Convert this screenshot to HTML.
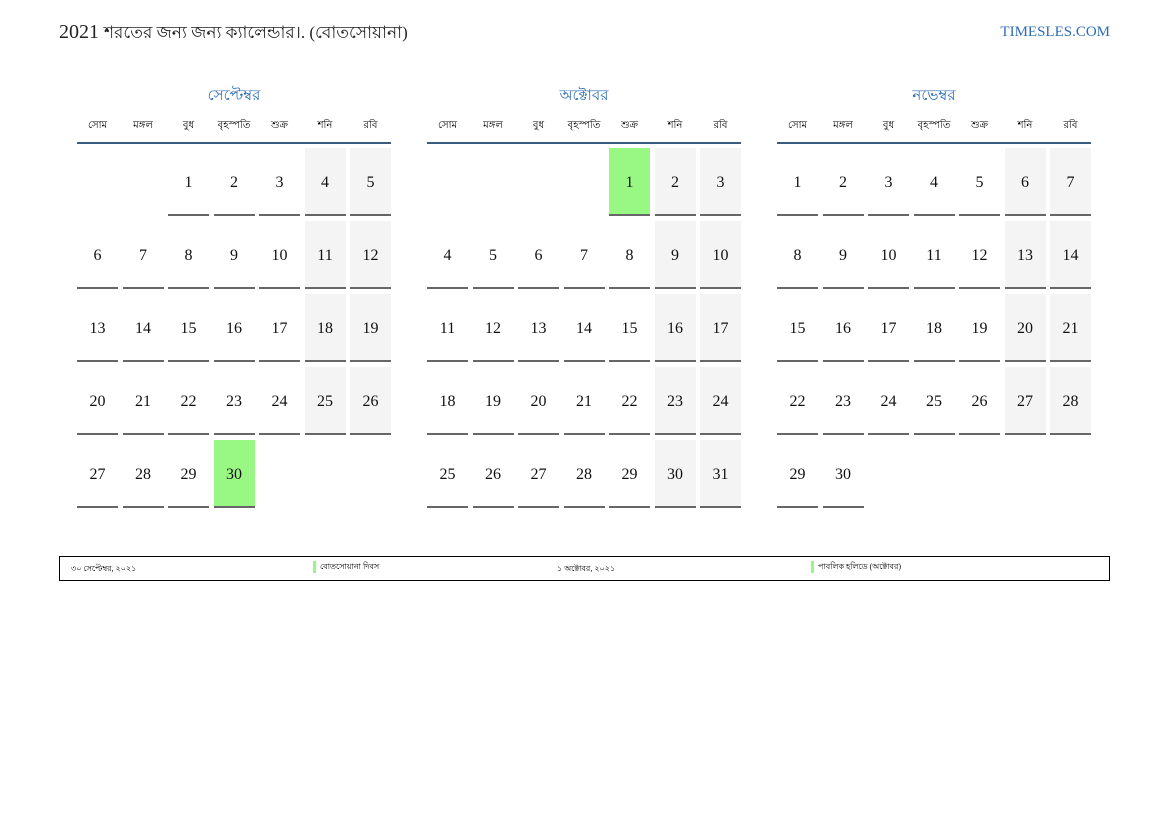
<!DOCTYPE html>
<html><head><meta charset="utf-8"><style>
body{margin:0;width:1169px;height:827px;background:#fff;font-family:"Liberation Serif",serif;position:relative;overflow:hidden}
.t{position:absolute;left:59px;top:20px;font-size:20px;color:#222}
.t b{font-weight:normal;font-size:17px}
.logo{position:absolute;right:59px;top:24px;font-size:15px;color:#2e6db4}
.cal{position:absolute;top:84px;width:314px}
.mt{text-align:center;color:#2e6db4;font-size:15px;height:22px}
.wd{display:grid;grid-template-columns:repeat(7,41px);column-gap:4.5px;font-size:10px;text-align:center;margin-top:12px;height:24px}
.hl{height:2px;background:#3d5a80}
.g{display:grid;grid-template-columns:repeat(7,41px);grid-auto-rows:68px;gap:5px 4.5px;margin-top:4px}
.g div{box-sizing:border-box;text-align:center;line-height:70px;font-size:16px;color:#111}
.g .d{border-bottom:2px solid #666}
.g .w{background:#f4f4f4}
.g .h{background:#99f783}
.f{position:absolute;left:59px;top:556px;width:1049px;height:23px;border:1.5px solid #000;font-size:8px}
.f span{position:absolute;top:6px}
.bar{display:inline-block;width:3px;height:12px;background:#99f783;vertical-align:middle;margin-right:4px}
</style></head><body>
<div class="t">2021 <b>শরতের জন্য জন্য ক্যালেন্ডার।. (বোতসোয়ানা)</b></div>
<div class="logo">TIMESLES.COM</div>

<div class="cal" style="left:77px">
<div class="mt">সেপ্টেম্বর</div>
<div class="wd"><span>সোম</span><span>মঙ্গল</span><span>বুধ</span><span>বৃহস্পতি</span><span>শুক্র</span><span>শনি</span><span>রবি</span></div>
<div class="hl"></div>
<div class="g">
<div></div><div></div><div class="d">1</div><div class="d">2</div><div class="d">3</div><div class="d w">4</div><div class="d w">5</div>
<div class="d">6</div><div class="d">7</div><div class="d">8</div><div class="d">9</div><div class="d">10</div><div class="d w">11</div><div class="d w">12</div>
<div class="d">13</div><div class="d">14</div><div class="d">15</div><div class="d">16</div><div class="d">17</div><div class="d w">18</div><div class="d w">19</div>
<div class="d">20</div><div class="d">21</div><div class="d">22</div><div class="d">23</div><div class="d">24</div><div class="d w">25</div><div class="d w">26</div>
<div class="d">27</div><div class="d">28</div><div class="d">29</div><div class="d h">30</div>
</div></div>

<div class="cal" style="left:427px">
<div class="mt">অক্টোবর</div>
<div class="wd"><span>সোম</span><span>মঙ্গল</span><span>বুধ</span><span>বৃহস্পতি</span><span>শুক্র</span><span>শনি</span><span>রবি</span></div>
<div class="hl"></div>
<div class="g">
<div></div><div></div><div></div><div></div><div class="d h">1</div><div class="d w">2</div><div class="d w">3</div>
<div class="d">4</div><div class="d">5</div><div class="d">6</div><div class="d">7</div><div class="d">8</div><div class="d w">9</div><div class="d w">10</div>
<div class="d">11</div><div class="d">12</div><div class="d">13</div><div class="d">14</div><div class="d">15</div><div class="d w">16</div><div class="d w">17</div>
<div class="d">18</div><div class="d">19</div><div class="d">20</div><div class="d">21</div><div class="d">22</div><div class="d w">23</div><div class="d w">24</div>
<div class="d">25</div><div class="d">26</div><div class="d">27</div><div class="d">28</div><div class="d">29</div><div class="d w">30</div><div class="d w">31</div>
</div></div>

<div class="cal" style="left:777px">
<div class="mt">নভেম্বর</div>
<div class="wd"><span>সোম</span><span>মঙ্গল</span><span>বুধ</span><span>বৃহস্পতি</span><span>শুক্র</span><span>শনি</span><span>রবি</span></div>
<div class="hl"></div>
<div class="g">
<div class="d">1</div><div class="d">2</div><div class="d">3</div><div class="d">4</div><div class="d">5</div><div class="d w">6</div><div class="d w">7</div>
<div class="d">8</div><div class="d">9</div><div class="d">10</div><div class="d">11</div><div class="d">12</div><div class="d w">13</div><div class="d w">14</div>
<div class="d">15</div><div class="d">16</div><div class="d">17</div><div class="d">18</div><div class="d">19</div><div class="d w">20</div><div class="d w">21</div>
<div class="d">22</div><div class="d">23</div><div class="d">24</div><div class="d">25</div><div class="d">26</div><div class="d w">27</div><div class="d w">28</div>
<div class="d">29</div><div class="d">30</div>
</div></div>

<div class="f">
<span style="left:11px">৩০ সেপ্টেম্বর, ২০২১</span>
<span style="left:253px;top:4px"><i class="bar"></i>বোতসোয়ানা দিবস</span>
<span style="left:497px">১ অক্টোবর, ২০২১</span>
<span style="left:751px;top:4px"><i class="bar"></i>পাবলিক হলিডে (অক্টোবর)</span>
</div>
</body></html>
